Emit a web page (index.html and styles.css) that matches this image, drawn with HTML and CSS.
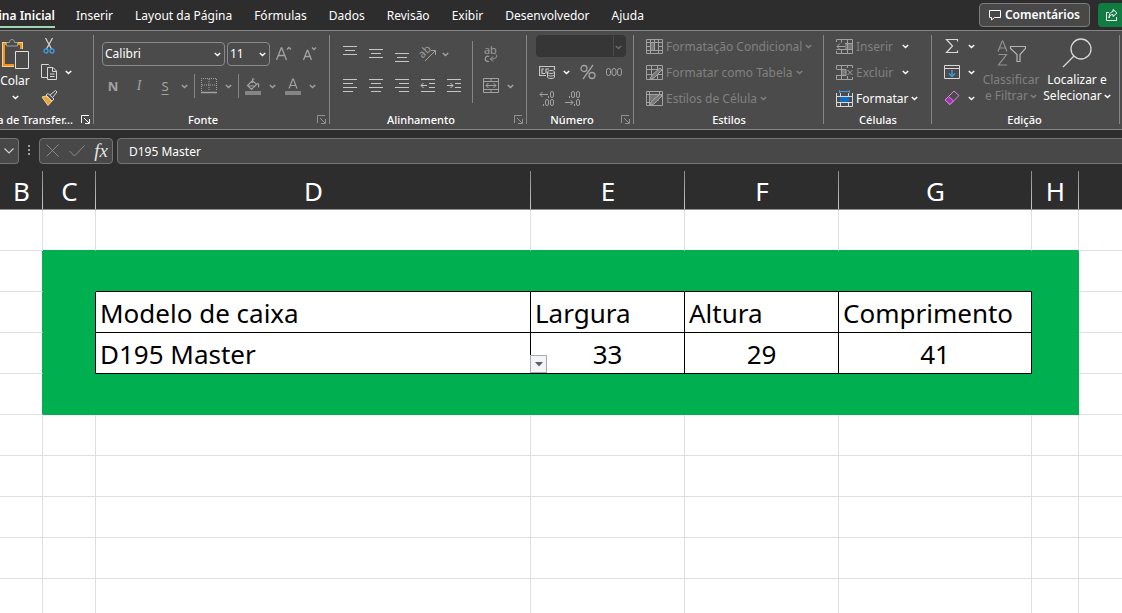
FILE: index.html
```html
<!DOCTYPE html>
<html lang="pt-BR">
<head>
<meta charset="utf-8">
<title>Planilha</title>
<link rel="stylesheet" href="styles.css">
</head>
<body>
<svg class="defs" aria-hidden="true">
  <symbol id="chev" viewBox="0 0 7 5"><path d="M.8 1 3.5 3.5 6.2 1" fill="none" stroke="currentColor" stroke-width="1.5"/></symbol>
  <symbol id="launch" viewBox="0 0 9 9"><path d="M.5 8V.5H8M3 3l5 5M8.5 4v4.5H4" fill="none" stroke="currentColor"/></symbol>
</svg>

<header class="tabs">
  <nav class="tab-list">
    <a class="tab active" href="#"><span>Página Inicial</span></a>
    <a class="tab" href="#">Inserir</a>
    <a class="tab" href="#">Layout da Página</a>
    <a class="tab" href="#">Fórmulas</a>
    <a class="tab" href="#">Dados</a>
    <a class="tab" href="#">Revisão</a>
    <a class="tab" href="#">Exibir</a>
    <a class="tab" href="#">Desenvolvedor</a>
    <a class="tab" href="#">Ajuda</a>
  </nav>
  <button class="comments"><svg width="12" height="12" viewBox="0 0 12 12"><path d="M.5 1.5h11v7H5.5L2.5 11V8.5h-2z" fill="none" stroke="currentColor"/></svg>Comentários</button>
  <button class="share" aria-label="Compartilhar"><svg width="14" height="14" viewBox="0 0 14 14"><path d="M4 4.5H1.500v8h10V9M8 1.500l4 3.500-4 3.500V6.500C5.500 6.500 4.500 8 4 10c0-4 1.500-6 4-6.500z" fill="none" stroke="currentColor"/></svg></button>
</header>

<main class="ribbon">
  <section class="group clipboard">
    <div class="tools">
      <button class="big paste">
        <svg width="28" height="31" viewBox="0 0 28 31"><path d="M13 26.500H2.500V4.500H6M16 4.500h4.500V10" fill="none" stroke="#f7d08a" stroke-width="3"/><path d="M13 26H3V5h4M16 5h4v5" fill="none" stroke="#f0941f" stroke-width="2"/><path d="M5.500 7V3.500h3c0-4 5-4 5 0h3V7z" fill="#4b4b4b" stroke="#a0a0a0"/><path d="M14.500 12.500h13v17h-13z" fill="#4b4b4b" stroke="#e0e0e0"/></svg>
        <span>Colar</span>
        <svg class="chev"><use href="#chev"/></svg>
      </button>
      <div class="stack">
        <div class="line"><button class="tool" aria-label="Recortar"><svg width="12" height="16" viewBox="0 0 12 16"><path d="M2.500 0 8.500 11M9.500 0l-6 11" stroke="#d0d0d0" stroke-width="1.300"/><g fill="none" stroke="#3c9be0" stroke-width="1.300"><circle cx="3" cy="13" r="2"/><circle cx="9" cy="13" r="2"/></g></svg></button></div>
        <div class="line"><button class="tool" aria-label="Copiar"><svg width="17" height="17" viewBox="0 0 17 17"><path d="M6 13.500H.5V.5h7l1 1M6.500 3.500H12L15.500 7v8.500h-9zM11.500 4v3.500h4M9 10h4.500M9 12.500h4.500" fill="none" stroke="#d8d8d8"/></svg></button><button class="drop" aria-label="Opções de cópia"><svg class="chev"><use href="#chev"/></svg></button></div>
        <div class="line"><button class="tool" aria-label="Pincel de formatação"><svg width="17" height="16" viewBox="0 0 17 16"><path d="m1 7 4-1 6 5-4 4.500z" fill="#e9a53a" stroke="#f5d58c"/><path d="m5 5 2-1.500 6 5.500-2 2zM9 5l5.500-4.500 1.500 1.500L11.500 7.500" fill="#4b4b4b" stroke="#d8d8d8"/></svg></button></div>
      </div>
    </div>
    <footer class="caption"><h2>Área de Transfer...</h2><button class="launch lit" aria-label="Abrir Área de Transferência"><svg><use href="#launch"/></svg></button></footer>
  </section>

  <section class="group font">
    <div class="tools rows">
      <div class="line">
        <label class="combo family"><select aria-label="Fonte"><option>Calibri</option></select><svg class="chev"><use href="#chev"/></svg></label>
        <label class="combo size"><select aria-label="Tamanho da fonte"><option>11</option></select><svg class="chev"><use href="#chev"/></svg></label>
        <button class="tool dim" aria-label="Aumentar fonte"><svg width="16" height="16" viewBox="0 0 16 16"><path d="m.5 14 4.700-12h.6l4.700 12M2.300 9.500h6.500M11 3.500l2-2 2 2" fill="none" stroke="currentColor" stroke-width="1.300"/></svg></button>
        <button class="tool dim" aria-label="Diminuir fonte"><svg width="16" height="16" viewBox="0 0 16 16"><path d="M1.500 14 5.200 4.500h.6L9.500 14M3 10.500h5M10 1.500l2 2 2-2" fill="none" stroke="currentColor" stroke-width="1.300"/></svg></button>
      </div>
      <div class="line">
        <button class="tool dim bold">N</button><button class="tool dim italic">I</button><button class="tool dim under">S</button>
        <button class="drop dim" aria-label="Opções de sublinhado"><svg class="chev"><use href="#chev"/></svg></button>
        <span class="rule"></span>
        <button class="tool dim" aria-label="Bordas"><svg width="16" height="16" viewBox="0 0 16 16"><path d="M.5 13V.5h15V13M8 1v12M1 7h14" fill="none" stroke="currentColor" stroke-dasharray="1 1"/><path d="M0 14.500h16" stroke="currentColor" stroke-width="1.500"/></svg></button>
        <button class="drop dim" aria-label="Opções de borda"><svg class="chev"><use href="#chev"/></svg></button>
        <span class="rule"></span>
        <button class="tool dim" aria-label="Cor de preenchimento"><svg width="16" height="17" viewBox="0 0 16 17"><path d="m2.500 7.500 5-5 4 4-5 5zM7.500 5V1.500c0-1 1.500-1 1.500 0M11.500 6.500c2-2 2.500 0 2 3M3 8h7" fill="none" stroke="currentColor" stroke-width="1.200"/><path d="M0 13h16v4H0z" fill="#858585"/></svg></button>
        <button class="drop dim" aria-label="Opções de preenchimento"><svg class="chev"><use href="#chev"/></svg></button>
        <span class="space"></span>
        <button class="tool dim" aria-label="Cor da fonte"><svg width="16" height="17" viewBox="0 0 16 17"><path d="M4 10.500 7.700 1h.6L12 10.500M5.300 7.500h5.400" fill="none" stroke="currentColor" stroke-width="1.200"/><path d="M0 13h16v4H0z" fill="#858585"/></svg></button>
        <button class="drop dim" aria-label="Opções de cor da fonte"><svg class="chev"><use href="#chev"/></svg></button>
      </div>
    </div>
    <footer class="caption"><h2>Fonte</h2><button class="launch" aria-label="Abrir Fonte"><svg><use href="#launch"/></svg></button></footer>
  </section>

  <section class="group align">
    <div class="tools">
      <div class="rows left">
        <div class="line">
          <button class="tool lite" aria-label="Alinhar em cima"><svg width="16" height="18" viewBox="0 0 16 18"><path d="M1 1.500h14M3 5.500h10M1 9.500h14" stroke="currentColor"/></svg></button>
          <button class="tool lite" aria-label="Alinhar no meio"><svg width="16" height="18" viewBox="0 0 16 18"><path d="M1 4.500h14M3 8.500h10M1 12.500h14" stroke="currentColor"/></svg></button>
          <button class="tool lite" aria-label="Alinhar embaixo"><svg width="16" height="18" viewBox="0 0 16 18"><path d="M1 8.500h14M3 12.500h10M1 16.500h14" stroke="currentColor"/></svg></button>
          <button class="tool dim" aria-label="Orientação"><svg width="18" height="18" viewBox="0 0 18 18"><text class="glyph" x="0" y="11" font-size="11" transform="rotate(-45 5 8)">ab</text><path d="M6 16 16 6M12 5.500h4.500V10" fill="none" stroke="currentColor"/></svg></button>
          <button class="drop near dim" aria-label="Opções de orientação"><svg class="chev"><use href="#chev"/></svg></button>
        </div>
        <div class="line">
          <button class="tool lite" aria-label="Alinhar à esquerda"><svg width="16" height="14" viewBox="0 0 16 14"><path d="M1 .5h14M1 4.500h10M1 8.500h14M1 12.500h10" stroke="currentColor"/></svg></button>
          <button class="tool lite" aria-label="Centralizar"><svg width="16" height="14" viewBox="0 0 16 14"><path d="M1 .5h14M3 4.500h10M1 8.500h14M3 12.500h10" stroke="currentColor"/></svg></button>
          <button class="tool lite" aria-label="Alinhar à direita"><svg width="16" height="14" viewBox="0 0 16 14"><path d="M1 .5h14M5 4.500h10M1 8.500h14M5 12.500h10" stroke="currentColor"/></svg></button>
          <button class="tool lite" aria-label="Diminuir recuo"><svg width="16" height="14" viewBox="0 0 16 14"><path d="M1 .5h14M9 4.500h6M9 8.500h6M1 12.500h14M1 6.500h6M3.500 4 1 6.500 3.500 9" fill="none" stroke="currentColor"/></svg></button>
          <button class="tool lite" aria-label="Aumentar recuo"><svg width="16" height="14" viewBox="0 0 16 14"><path d="M1 .5h14M9 4.500h6M9 8.500h6M1 12.500h14M1 6.500h6M4.500 4 7 6.500 4.500 9" fill="none" stroke="currentColor"/></svg></button>
        </div>
      </div>
      <div class="rows right">
        <div class="line"><button class="tool dim" aria-label="Quebrar texto"><svg width="16" height="18" viewBox="0 0 16 18"><text class="glyph" x="1" y="9" font-size="11">ab</text><path d="M6 11.500c-4-2-5.500 5-1 5 .5 0 .8-.2 1-.5" fill="none" stroke="currentColor" stroke-width="1.200"/><path d="M13 9.500c2 3-1 4.500-5.500 4.500M10 11.500 7.500 14l2.500 2.500" fill="none" stroke="currentColor"/></svg></button></div>
        <div class="line"><button class="tool dim" aria-label="Mesclar e centralizar"><svg width="16" height="16" viewBox="0 0 16 16"><path d="M.5.5h15v14H.5zM.5 3.500h15M.5 11.500h15M8 .5v3M8 11.500v3M3 7.500h10M5.500 5 3 7.500 5.500 10M10.500 5 13 7.500 10.500 10" fill="none" stroke="currentColor"/></svg></button><button class="drop dim" aria-label="Opções de mesclagem"><svg class="chev"><use href="#chev"/></svg></button></div>
      </div>
    </div>
    <footer class="caption"><h2>Alinhamento</h2><button class="launch" aria-label="Abrir Alinhamento"><svg><use href="#launch"/></svg></button></footer>
  </section>

  <section class="group number">
    <div class="tools stack">
      <div class="line"><label class="combo format"><select aria-label="Formato de número" disabled><option></option></select><svg class="chev"><use href="#chev"/></svg></label></div>
      <div class="line">
        <button class="tool lite" aria-label="Formato de contabilização"><svg width="17" height="14" viewBox="0 0 17 14"><path d="M7 10.500H.5v-9h15V5M5 4H3v4.500h3M10 4H7v4.500" fill="none" stroke="currentColor" stroke-width="1.200"/><path d="M8.500 7v5c0 2 7 2 7 0V7c0-2-7-2-7 0zm0 0c0 2 7 2 7 0m-7 2.500c0 2 7 2 7 0" fill="#4b4b4b" stroke="currentColor"/></svg></button>
        <button class="drop" aria-label="Opções de moeda"><svg class="chev"><use href="#chev"/></svg></button>
        <button class="tool dim" aria-label="Porcentagem"><svg width="16" height="16" viewBox="0 0 16 16"><g fill="none" stroke="currentColor" stroke-width="1.300"><circle cx="4" cy="4.500" r="3"/><circle cx="12" cy="11.500" r="3"/><path d="M13 1 3 15"/></g></svg></button>
        <button class="tool dim" aria-label="Separador de milhares"><svg width="16" height="9" viewBox="0 0 16 9"><g fill="none" stroke="currentColor"><rect x=".5" y=".5" width="4" height="7" rx="2"/><rect x="6" y=".5" width="4" height="7" rx="2"/><rect x="11.500" y=".5" width="4" height="7" rx="2"/></g></svg></button>
      </div>
      <div class="line">
        <button class="tool dim" aria-label="Aumentar casas decimais"><svg width="16" height="16" viewBox="0 0 16 16"><path d="M9 4.500H1M3.500 2 1 4.500 3.500 7M9.500 6v2M4.500 14v2" fill="none" stroke="currentColor"/><g fill="none" stroke="currentColor"><rect x="11.500" y="1.500" width="3" height="6" rx="1.500"/><rect x="6.500" y="9.500" width="3" height="6" rx="1.500"/><rect x="11.500" y="9.500" width="3" height="6" rx="1.500"/></g></svg></button>
        <button class="tool dim" aria-label="Diminuir casas decimais"><svg width="16" height="16" viewBox="0 0 16 16"><path d="M0 12.500h8M5.500 10 8 12.500 5.500 15M4.500 6v2M9.500 14v2" fill="none" stroke="currentColor"/><g fill="none" stroke="currentColor"><rect x="6.500" y="1.500" width="3" height="6" rx="1.500"/><rect x="11.500" y="1.500" width="3" height="6" rx="1.500"/><rect x="11.500" y="9.500" width="3" height="6" rx="1.500"/></g></svg></button>
      </div>
    </div>
    <footer class="caption"><h2>Número</h2><button class="launch" aria-label="Abrir Número"><svg><use href="#launch"/></svg></button></footer>
  </section>

  <section class="group styles">
    <div class="tools stack">
      <button class="item off"><svg width="17" height="15" viewBox="0 0 17 15"><path d="M4 4h5v7H4z" fill="#777"/><path d="M.5.5h16v14H.5zM.5 3.500h16M.5 7.500h4M12 7.500h4M.5 11.500h16M4.500.5v14M8.500 .5V3.500M12.500.5v14M8.500 4v7" fill="none" stroke="#a2a2a2"/></svg>Formatação Condicional<svg class="chev"><use href="#chev"/></svg></button>
      <button class="item off"><svg width="17" height="15" viewBox="0 0 17 15"><path d="M.5.5h16v14H.5zM.5 4.500h16M.5 9.500h16M5.500.5v14M11.500 .5v14" fill="none" stroke="#a2a2a2"/><path d="m4 14 2-4 8-7 2 2-8 8z" fill="#777" stroke="#a2a2a2"/></svg>Formatar como Tabela<svg class="chev"><use href="#chev"/></svg></button>
      <button class="item off"><svg width="17" height="15" viewBox="0 0 17 15"><path d="M4 4h9v6H4z" fill="#777"/><path d="M.5.5h16v14H.5zM.5 3.500h16M3.500.5v14M.5 11.500h5M13.500.5V4" fill="none" stroke="#a2a2a2"/><path d="m4 14 2-4 8-7 2 2-8 8z" fill="#777" stroke="#a2a2a2"/></svg>Estilos de Célula<svg class="chev"><use href="#chev"/></svg></button>
    </div>
    <footer class="caption"><h2>Estilos</h2></footer>
  </section>

  <section class="group cells">
    <div class="tools stack">
      <div class="line"><button class="item off"><svg width="17" height="15" viewBox="0 0 17 15"><path d="M9 4.500h7V10H9z" fill="#777"/><path d="M.5 3V.5h16v14H.5V12M5.500 .5v3M11.500 .5v14M.5 10.500h16M9 4.500h7.500M5.500 11v3.500M9 7.500H1M4 4.500l-3 3 3 3" fill="none" stroke="#a2a2a2"/></svg>Inserir</button><button class="drop wide" aria-label="Opções de inserir"><svg class="chev"><use href="#chev"/></svg></button></div>
      <div class="line"><button class="item off"><svg width="17" height="15" viewBox="0 0 17 15"><path d="M5 4.500h5V10H5z" fill="#777"/><path d="M.5 4V.5h16V3M.5 4.500h9.500v6H.5M.5 10v4.500h16V12M5.500.5v14M11.500 .5V3M11.500 11v3.500M11.500 5l5 5M16.500 5l-5 5" fill="none" stroke="#a2a2a2"/></svg>Excluir</button><button class="drop wide" aria-label="Opções de excluir"><svg class="chev"><use href="#chev"/></svg></button></div>
      <button class="item"><svg width="17" height="17" viewBox="0 0 17 17"><path d="M.5 3v13.500h16V3M.5 6.500h16M.5 12.500h16M4.500 3v13.500M12.500 3v13.500" fill="none" stroke="#d8d8d8"/><path d="M4 7h9v5H4z" fill="#0a6fc8"/><path d="M4 1.500h9M3.500 0v3M13.500 0v3" stroke="#3c9be0"/></svg>Formatar<svg class="chev"><use href="#chev"/></svg></button>
    </div>
    <footer class="caption"><h2>Células</h2></footer>
  </section>

  <section class="group edit">
    <div class="tools">
      <div class="stack">
        <div class="line"><button class="tool" aria-label="Soma"><svg width="16" height="16" viewBox="0 0 16 16"><path d="M13.500 3.500v-2h-11l6 6.500-6 6.500h11v-2" fill="none" stroke="#d8d8d8" stroke-width="1.200"/></svg></button><button class="drop" aria-label="Opções de soma"><svg class="chev"><use href="#chev"/></svg></button></div>
        <div class="line"><button class="tool" aria-label="Preencher"><svg width="16" height="15" viewBox="0 0 16 15"><path d="M.5.5h15v13H.5zM.5 3.500h15" fill="none" stroke="#d8d8d8"/><path d="M8 5v6.500M5 8.500l3 3 3-3" fill="none" stroke="#3c9be0" stroke-width="1.400"/></svg></button><button class="drop" aria-label="Opções de preencher"><svg class="chev"><use href="#chev"/></svg></button></div>
        <div class="line"><button class="tool" aria-label="Limpar"><svg width="16" height="16" viewBox="0 0 16 16"><path d="m1 10 9-9 5 4.500-9 9z" fill="#4b4b4b" stroke="#d58ae0"/><path d="m1 10 3.500-3.500 5 4.500L6 14.500z" fill="#a32fb4" stroke="#d58ae0"/></svg></button><button class="drop" aria-label="Opções de limpar"><svg class="chev"><use href="#chev"/></svg></button></div>
      </div>
      <button class="big sort off"><svg width="30" height="30" viewBox="0 0 30 30"><path d="M2 13.500 6.200 3h.6L11 13.500M3.500 10h6M2.500 16.500h8l-8 10.500h8.500" fill="none" stroke="#929292" stroke-width="1.200"/><path d="M14.500 8.500h15v2L24 16.500v7h-3v-7l-6.500-6z" fill="none" stroke="#b5b5b5" stroke-width="1.200"/></svg><span>Classificar</span><span>e Filtrar <svg class="chev"><use href="#chev"/></svg></span></button>
      <button class="big find"><svg width="30" height="30" viewBox="0 0 30 30"><circle cx="19" cy="11" r="10" fill="none" stroke="#d8d8d8" stroke-width="1.300"/><path d="M12 18 1 29" stroke="#d8d8d8" stroke-width="1.300"/></svg><span>Localizar e</span><span>Selecionar <svg class="chev"><use href="#chev"/></svg></span></button>
    </div>
    <footer class="caption"><h2>Edição</h2></footer>
  </section>
</main>

<div class="formula-bar">
  <button class="name-drop" aria-label="Caixa de nome"><svg width="10" height="6" viewBox="0 0 10 6"><path d="m.5.5 4.500 4.500L9.500.5" fill="none" stroke="#d0d0d0" stroke-width="1.200"/></svg></button>
  <svg class="grip" width="2" height="11" viewBox="0 0 2 11"><path d="M0 0h2v2H0zM0 4h2v2H0zM0 8h2v2H0z" fill="#a0a0a0"/></svg>
  <div class="fx-box">
    <button aria-label="Cancelar"><svg width="13" height="13" viewBox="0 0 13 13"><path d="m.5.5 12 12M12.500.5l-12 12" stroke="#8a8a8a"/></svg></button>
    <button aria-label="Inserir valor"><svg width="16" height="12" viewBox="0 0 16 12"><path d="m.5 6 5 5L15.500.5" fill="none" stroke="#8a8a8a"/></svg></button>
    <button class="fx">fx</button>
  </div>
  <input class="formula" aria-label="Barra de fórmulas" value="D195 Master">
</div>

<table class="sheet">
  <colgroup><col class="cb"><col class="cc"><col class="cd"><col class="ce"><col class="ce"><col class="cg"><col class="ch"><col></colgroup>
  <thead><tr><th>B</th><th>C</th><th>D</th><th>E</th><th>F</th><th>G</th><th>H</th><th></th></tr></thead>
  <tbody>
    <tr class="above"><td></td><td></td><td></td><td></td><td></td><td></td><td></td><td></td></tr>
    <tr class="fill lead"><td></td><td></td><td></td><td></td><td></td><td></td><td></td><td></td></tr>
    <tr class="fill data"><td></td><td></td><td>Modelo de caixa</td><td>Largura</td><td>Altura</td><td>Comprimento</td><td></td><td></td></tr>
    <tr class="fill data"><td></td><td></td><td class="picked">D195 Master<button class="pick" aria-label="Escolher modelo"><svg width="8" height="5" viewBox="0 0 8 5"><path d="M0 0h8L4 4.500z" fill="#606060"/></svg></button></td><td class="num">33</td><td class="num">29</td><td class="num">41</td><td></td><td></td></tr>
    <tr class="fill"><td></td><td></td><td></td><td></td><td></td><td></td><td></td><td></td></tr>
    <tr><td></td><td></td><td></td><td></td><td></td><td></td><td></td><td></td></tr>
    <tr><td></td><td></td><td></td><td></td><td></td><td></td><td></td><td></td></tr>
    <tr><td></td><td></td><td></td><td></td><td></td><td></td><td></td><td></td></tr>
    <tr><td></td><td></td><td></td><td></td><td></td><td></td><td></td><td></td></tr>
    <tr><td></td><td></td><td></td><td></td><td></td><td></td><td></td><td></td></tr>
  </tbody>
</table>
</body>
</html>
```

FILE: styles.css
```css
* { box-sizing: border-box; }
body {
  margin: 0;
  overflow: hidden;
  background: #fff;
  color: #fff;
  font: 12px/16px "Noto Sans", "Open Sans", sans-serif;
}
button, select, input { font: inherit; color: inherit; background: none; border: 0; padding: 0; margin: 0; }
button { display: flex; align-items: center; justify-content: center; flex: none; }
svg { flex: none; display: block; }
.defs { position: absolute; width: 0; height: 0; }
.chev { width: 7px; height: 5px; }

/* Tabs */
.tabs { display: flex; align-items: center; height: 30px; background: #2d2d2d; }
.tab-list { display: flex; gap: 22px; flex: 1; padding-top: 2px; }
.tab { color: #fff; text-decoration: none; white-space: nowrap; line-height: 20px; }
.active { display: flex; justify-content: flex-end; width: 55px; font-weight: 600; border-bottom: 2px solid #9fd5b7; margin-bottom: -2px; margin-right: -1px; }
.comments { gap: 4px; width: 111px; height: 24px; border: 1px solid #7c7c7c; border-radius: 4px; background: #484848; font-weight: 600; }
.share { width: 28px; height: 24px; margin: 0 -4px 0 8px; border-radius: 4px; background: #107c41; }

/* Ribbon */
.ribbon { display: flex; height: 100px; padding-top: 2px; background: #4b4b4b; border-top: 1px solid #858585; border-bottom: 1px solid #858585; overflow: hidden; }
.group { position: relative; display: flex; flex-direction: column; flex: none; }
.group::after { content: ""; position: absolute; right: 0; top: 2px; bottom: 5px; width: 1px; background: #858585; }
.tools { display: flex; height: 78px; }
.caption { display: flex; align-items: center; justify-content: center; height: 17px; position: relative; }
.caption h2 { margin: 0; font-size: 11px; font-weight: 500; white-space: nowrap; }
.launch { position: absolute; right: 4px; top: 4px; color: #929292; }
.launch svg { width: 9px; height: 9px; }
.lit { color: #fff; }
.line { display: flex; align-items: center; height: 26px; }
.stack { display: flex; flex-direction: column; }
.rows { display: flex; flex-direction: column; gap: 6px; padding-top: 8px; }
.tool { width: 26px; height: 24px; }
.drop { width: 12px; height: 24px; }
.dim { color: #a2a2a2; }
.lite { color: #c6c6c6; }
.space { width: 2px; }
.rule { width: 1px; height: 24px; margin: 0 1px 0 4px; background: #858585; }
.big { flex-direction: column; white-space: nowrap; }
.big span { display: flex; align-items: center; gap: 2px; }
.off { color: #818181; }
.glyph { fill: currentColor; font-family: "Open Sans", sans-serif; }

.clipboard { width: 94px; }
.clipboard .tools { gap: 6px; }
.paste { width: 30px; justify-content: flex-start; padding-top: 6px; gap: 3px; }
.paste .chev { margin-top: 3px; }
.clipboard .caption { justify-content: flex-end; padding-right: 21px; }
.drop.wide { width: 24px; }

.font { width: 236px; padding-left: 6px; }
.combo { position: relative; display: flex; height: 24px; border: 1px solid #8a8a8a; border-radius: 4px; }
.combo select { appearance: none; flex: 1; width: 100%; padding: 0 0 0 2px; }
.combo .chev { position: absolute; right: 3px; top: 9px; }
.family { width: 123px; margin: 0 2px; }
.size { width: 43px; margin-right: 1px; }
.bold { font-weight: 700; font-size: 13px; }
.italic { font: italic 14px "Liberation Serif", serif; }
.under { text-decoration: underline; text-underline-offset: 3px; font-size: 13px; }

.align { width: 197px; padding-left: 7px; }
.left { width: 136px; position: relative; }
.left::after { content: ""; position: absolute; right: 0; top: 8px; height: 62px; width: 1px; background: #858585; }
.near { margin-left: -2px; }
.right { padding-left: 5px; }

.number { width: 107px; padding-left: 7px; }
.format { width: 90px; height: 22px; margin-left: 2px; border-color: #363636; background: #363636; color: #6c6c6c; }
.format::after { content: ""; position: absolute; right: 11px; top: 0; bottom: 0; width: 1px; background: #4b4b4b; }
.number .drop { margin-right: 3px; }

.item { height: 26px; gap: 3px; padding-top: 1px; justify-content: flex-start; white-space: nowrap; }
.styles { width: 190px; padding-left: 12px; }
.cells { width: 108px; padding-left: 12px; }
.edit { width: 188px; padding-left: 7px; }
.sort, .find { width: 66px; justify-content: flex-start; padding-top: 5px; }
.sort { margin-left: 1px; }
.sort > svg, .find > svg { margin-bottom: 4px; }
.styles .caption, .cells .caption { padding-right: 12px; }
.edit .caption { padding-right: 10px; }
.number .caption, .align .caption, .font .caption { margin-left: -6px; }
.number .caption { padding-right: 18px; }
.align .caption { padding-right: 16px; }
.font .caption { padding-right: 18px; }

/* Formula bar */
.formula-bar { display: flex; align-items: center; height: 41px; background: #2d2d2d; }
.name-drop { width: 19px; height: 26px; border: 1px solid #757575; border-left: 0; border-radius: 0 4px 4px 0; background: #484848; }
.grip { margin: 0 9px; }
.fx-box { display: flex; align-items: center; width: 74px; height: 26px; padding: 0 4px 0 6px; justify-content: space-between; border: 1px solid #757575; border-radius: 4px; background: #484848; }
.fx { font: italic 19px/20px "Liberation Serif", serif; color: #e4e4e4; }
.formula { flex: 1; height: 26px; margin: 0 -4px 0 4px; padding: 2px 0 0 11px; border: 1px solid #757575; border-radius: 4px; background: #484848; }

/* Sheet */
.sheet { width: 100%; table-layout: fixed; border-collapse: separate; border-spacing: 0; color: #000; font-size: 26px; line-height: 36px; }
.cb { width: 43px; }
.cc { width: 53px; }
.cd { width: 435px; }
.ce { width: 154px; }
.cg { width: 193px; }
.ch { width: 47px; }
.sheet th { height: 39px; padding: 2px 0 0; background: linear-gradient(#8a8a8a, #c8c8c8) right / 1px 100% no-repeat #2d2d2d; border-bottom: 1px solid #8f8f8f; color: #fff; font-weight: 400; }
.sheet th:last-child { background: #2d2d2d; }
.sheet td { height: 41px; padding: 2px 0 0 4px; border-right: 1px solid #dfdfdf; border-bottom: 1px solid #dfdfdf; white-space: nowrap; }
.sheet td:last-child { border-right: 0; }
.above td:nth-child(n+2):nth-child(-n+7) { border-bottom-color: #00b050; }
.sheet .fill td:first-child { border-right-color: #00b050; }
.fill td:nth-child(n+2):nth-child(-n+7) { background: #00b050; border-color: #00b050; }
.lead td:nth-child(n+3):nth-child(-n+6) { border-bottom-color: #000; }
.sheet .data td:nth-child(2):nth-child(2) { border-right-color: #000; }
.data td:nth-child(n+3):nth-child(-n+6) { background: #fff; border-color: #000; }
.sheet .num { text-align: center; padding-left: 0; }
.picked { position: relative; }
.pick { position: absolute; left: 100%; bottom: 0; z-index: 1; width: 17px; height: 18px; border: 1px solid #a6abb5; background: #f4f5f8; }
```
